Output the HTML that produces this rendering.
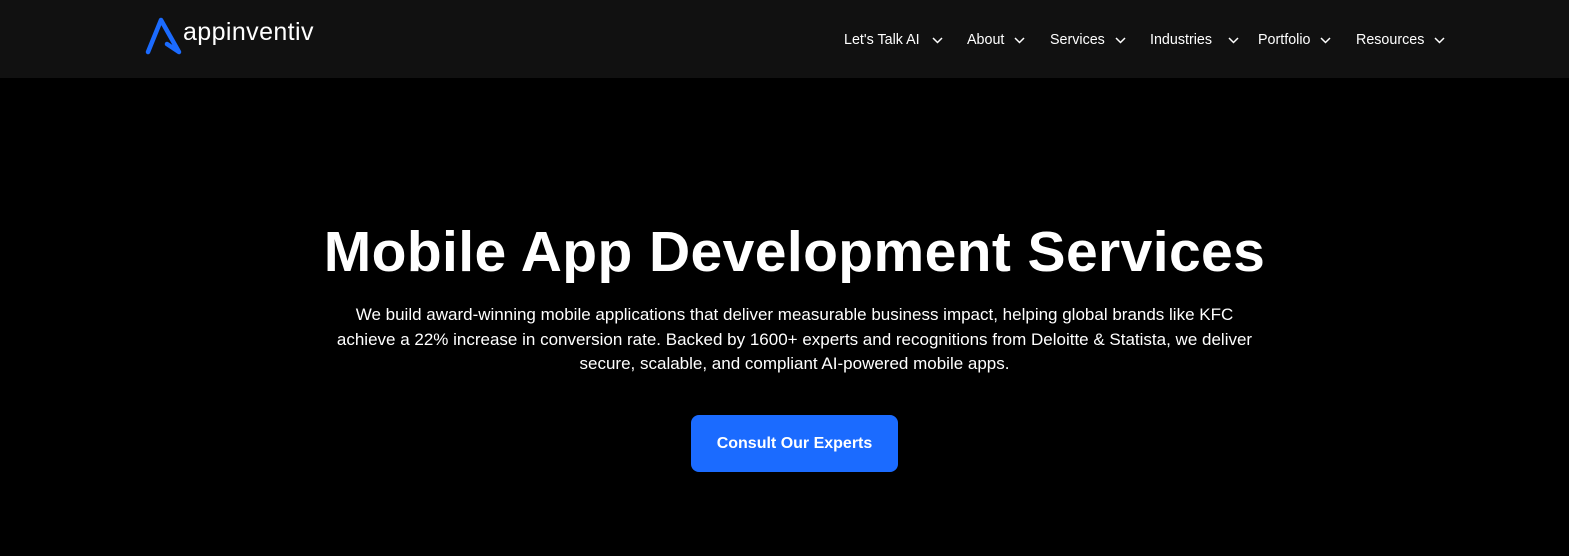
<!DOCTYPE html>
<html><head><meta charset="utf-8"><style>
*{margin:0;padding:0;box-sizing:border-box}
body{width:1569px;height:556px;background:#000;font-family:"Liberation Sans",sans-serif;color:#fff;overflow:hidden;position:relative}
.hdr{position:absolute;left:0;top:0;width:1569px;height:78px;background:#111}
.logo{position:absolute;left:145px;top:16px}
.logotext{position:absolute;left:183px;top:18px;font-size:25px;color:#fff;letter-spacing:0.4px}
.nav{position:absolute;top:32px;font-size:14.3px;color:#fff;white-space:nowrap}
.nav svg{position:absolute;top:5px}
h1{position:absolute;left:0;width:1589px;top:219px;text-align:center;font-size:57px;font-weight:bold;letter-spacing:0.4px}
p{position:absolute;left:0;width:1589px;top:303px;text-align:center;font-size:17px;line-height:24.5px}
.btn{position:absolute;left:691px;top:415px;width:207px;height:57px;background:#1b6bff;border-radius:8px;text-align:center;line-height:57px;font-weight:bold;font-size:16px}
</style></head><body>
<div class="hdr">
<svg class="logo" width="38" height="40" viewBox="0 0 38 40"><path d="M3 36 L16 4 L34 36 L22 28" fill="none" stroke="#1b6bff" stroke-width="4.5" stroke-linejoin="round" stroke-linecap="round"/></svg>
<div class="logotext">appinventiv</div>
<div class="nav" style="left:844px">Let's Talk AI<svg style="left:88px" width="11" height="7" viewBox="0 0 11 7"><path d="M1 1l4.5 4.5L10 1" fill="none" stroke="#fff" stroke-width="1.5"/></svg></div>
<div class="nav" style="left:967px">About<svg style="left:47px" width="11" height="7" viewBox="0 0 11 7"><path d="M1 1l4.5 4.5L10 1" fill="none" stroke="#fff" stroke-width="1.5"/></svg></div>
<div class="nav" style="left:1050px">Services<svg style="left:65px" width="11" height="7" viewBox="0 0 11 7"><path d="M1 1l4.5 4.5L10 1" fill="none" stroke="#fff" stroke-width="1.5"/></svg></div>
<div class="nav" style="left:1150px">Industries<svg style="left:78px" width="11" height="7" viewBox="0 0 11 7"><path d="M1 1l4.5 4.5L10 1" fill="none" stroke="#fff" stroke-width="1.5"/></svg></div>
<div class="nav" style="left:1258px">Portfolio<svg style="left:62px" width="11" height="7" viewBox="0 0 11 7"><path d="M1 1l4.5 4.5L10 1" fill="none" stroke="#fff" stroke-width="1.5"/></svg></div>
<div class="nav" style="left:1356px">Resources<svg style="left:78px" width="11" height="7" viewBox="0 0 11 7"><path d="M1 1l4.5 4.5L10 1" fill="none" stroke="#fff" stroke-width="1.5"/></svg></div>
</div>
<h1>Mobile App Development Services</h1>
<p>We build award-winning mobile applications that deliver measurable business impact, helping global brands like KFC<br>achieve a 22% increase in conversion rate. Backed by 1600+ experts and recognitions from Deloitte &amp; Statista, we deliver<br>secure, scalable, and compliant AI-powered mobile apps.</p>
<div class="btn">Consult Our Experts</div>
</body></html>
